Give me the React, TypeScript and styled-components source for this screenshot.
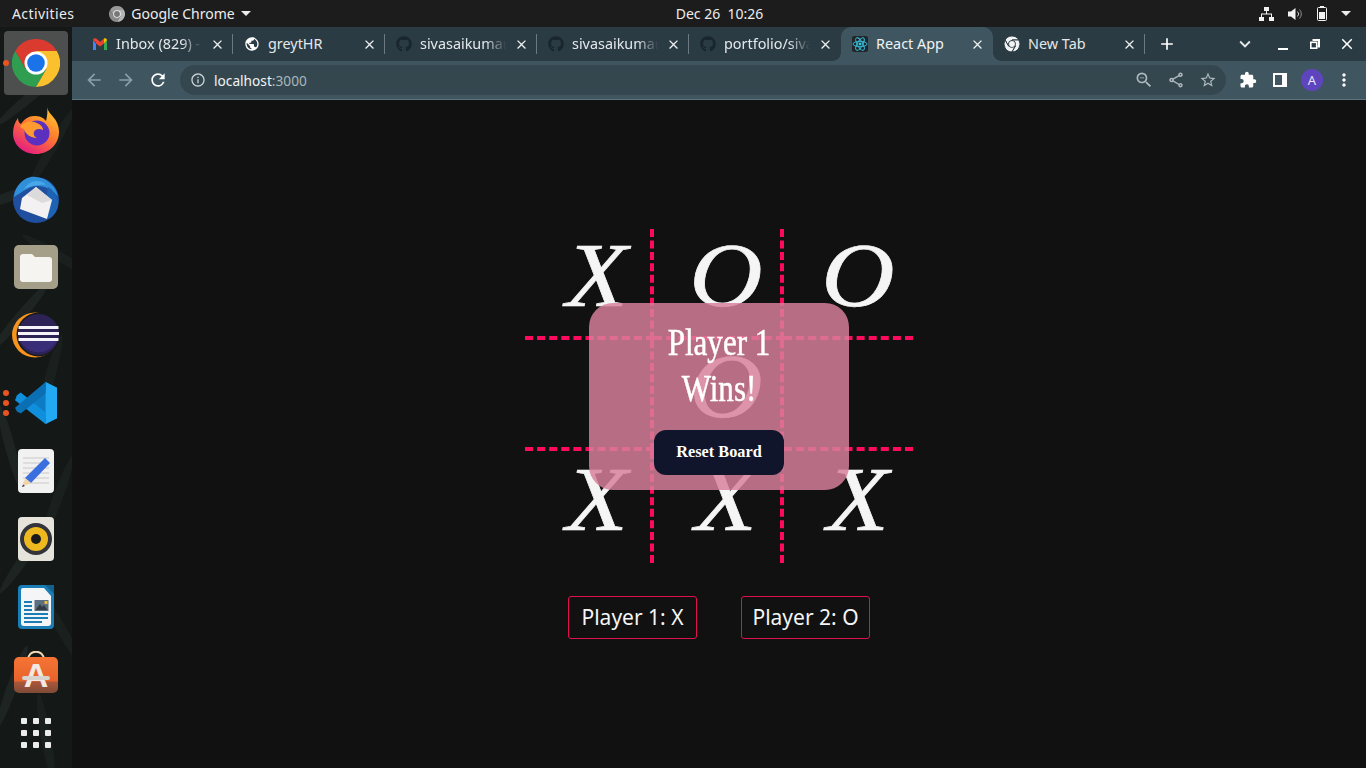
import React from "react";
import styled, { createGlobalStyle } from "styled-components";
import {
  MdAdd,
  MdArrowBack,
  MdArrowForward,
  MdClose,
  MdExpandMore,
  MdExtension,
  MdInfoOutline,
  MdMoreVert,
  MdOutlineShare,
  MdPublic,
  MdRefresh,
  MdStarBorder,
  MdZoomOut
} from "react-icons/md";
import { FaGithub } from "react-icons/fa";

const GlobalStyle = createGlobalStyle`
  html, body {
    margin: 0;
    width: 1366px;
    height: 768px;
    overflow: hidden;
    background: #111111;
    font-family: "Noto Sans", "Open Sans", sans-serif;
  }
`;

const Screen = styled.div`
  width: 1366px;
  height: 768px;
  display: grid;
  grid-template-rows: 27px 1fr;
  grid-template-columns: 72px 1fr;
`;

/* ---- gnome top bar ---- */

const TopBar = styled.header`
  grid-column: 1 / 3;
  display: grid;
  grid-template-columns: 1fr auto 1fr;
  align-items: center;
  background: #1c1c1c;
  color: #ececec;
  font-size: 14px;
  padding: 0 15px 0 12px;
`;

const TopLeft = styled.div`
  display: flex;
  align-items: center;
`;

const Activities = styled.span`
  letter-spacing: 0.4px;
`;

const AppMenu = styled.div`
  display: flex;
  align-items: center;
  gap: 6px;
  margin-left: 35px;
`;

const Caret = styled.span`
  width: 0;
  height: 0;
  border-left: 5px solid transparent;
  border-right: 5px solid transparent;
  border-top: 5px solid #ececec;
`;

const Clock = styled.div`
  white-space: pre;
  margin-left: 76px;
`;

const TopRight = styled.div`
  display: flex;
  align-items: center;
  justify-content: flex-end;
  gap: 14px;
`;

/* ---- dock ---- */

const Dock = styled.nav`
  position: relative;
  overflow: hidden;
  display: flex;
  flex-direction: column;
  align-items: center;
  gap: 4px;
  padding-top: 4px;
  background: #141816;
`;

const Leaves = styled.svg`
  position: absolute;
  inset: 0;
`;

const DockItem = styled.div<{ $active?: boolean; $short?: boolean }>`
  position: relative;
  flex: none;
  width: 64px;
  height: ${(p) => (p.$short ? "44px" : "64px")};
  display: flex;
  align-items: center;
  justify-content: center;
  border-radius: 4px;
  background: ${(p) => (p.$active ? "#4d4f4f" : "transparent")};
`;

const RunDots = styled.div`
  position: absolute;
  left: -1px;
  top: 50%;
  transform: translateY(-50%);
  display: flex;
  flex-direction: column;
  gap: 4px;
`;

const RunDot = styled.span`
  width: 6px;
  height: 6px;
  border-radius: 50%;
  background: #e95420;
`;

const AppGrid = styled.div`
  display: grid;
  grid-template-columns: repeat(3, 6px);
  gap: 6px;
`;

const AppGridDot = styled.span`
  width: 6px;
  height: 6px;
  border-radius: 1px;
  background: #ececec;
`;

/* ---- browser ---- */

const Browser = styled.div`
  display: flex;
  flex-direction: column;
  min-width: 0;
`;

const TabStrip = styled.div`
  height: 34px;
  display: flex;
  align-items: stretch;
  padding-left: 9px;
  background: #2b3b43;
`;

const Tab = styled.div<{ $active?: boolean }>`
  position: relative;
  width: 152px;
  box-sizing: border-box;
  display: flex;
  align-items: center;
  padding: 0 8px 0 11px;
  color: ${(p) => (p.$active ? "#f0f3f4" : "#e4e8ea")};
  background: ${(p) => (p.$active ? "#3f5660" : "transparent")};
  border-radius: ${(p) => (p.$active ? "10px 10px 0 0" : "0")};
  font-size: 14.4px;
  /* the active tab flares into the toolbar at its two bottom corners */
  &::before,
  &::after {
    content: "";
    display: ${(p) => (p.$active ? "block" : "none")};
    position: absolute;
    bottom: 0;
    width: 8px;
    height: 8px;
  }
  &::before {
    left: -8px;
    background: radial-gradient(circle at 0 0, transparent 7.5px, #3f5660 8px);
  }
  &::after {
    right: -8px;
    background: radial-gradient(circle at 100% 0, transparent 7.5px, #3f5660 8px);
  }
`;

const TabSeparator = styled.span`
  position: absolute;
  right: 0;
  top: 7px;
  bottom: 7px;
  width: 1px;
  background: #6b7a81;
`;

const TabIcon = styled.span`
  width: 16px;
  height: 16px;
  flex: none;
  display: flex;
  align-items: center;
  justify-content: center;
`;

const TabTitle = styled.span<{ $fade?: boolean }>`
  flex: 1;
  min-width: 0;
  margin: -2px 8px 0 8px;
  overflow: hidden;
  white-space: nowrap;
  ${(p) =>
    p.$fade
      ? "mask-image: linear-gradient(to right, #000 76%, transparent 100%);"
      : ""}
`;

const TabClose = styled(MdClose)`
  flex: none;
  width: 15px;
  height: 15px;
  color: #eef1f2;
`;

const NewTabButton = styled(MdAdd)`
  align-self: center;
  width: 20px;
  height: 20px;
  margin-left: 12px;
  color: #ffffff;
`;

const WindowControls = styled.div`
  margin-left: auto;
  display: flex;
  align-items: center;
  padding-right: 3px;
  color: #ffffff;
`;

const WindowButton = styled.span<{ $gapRight?: boolean }>`
  width: 32px;
  display: flex;
  align-items: center;
  justify-content: center;
  margin-right: ${(p) => (p.$gapRight ? "6px" : "0")};
`;

const Toolbar = styled.div`
  height: 39px;
  box-sizing: border-box;
  display: flex;
  align-items: center;
  padding-left: 6px;
  background: #3f5660;
  border-bottom: 1px solid #5b7480;
`;

const NavButton = styled.span<{ $dim?: boolean }>`
  width: 32px;
  display: flex;
  justify-content: center;
  font-size: 20px;
  color: ${(p) => (p.$dim ? "#8d9ea6" : "#ffffff")};
`;

const Omnibox = styled.div`
  width: 1046px;
  height: 30px;
  margin-left: 6px;
  display: flex;
  align-items: center;
  padding: 0 2px 0 10px;
  box-sizing: border-box;
  border-radius: 15px;
  background: #34474f;
  font-size: 13.7px;
  color: #f1f3f4;
`;

const Url = styled.span`
  margin-left: 8px;
  flex: 1;
`;

const UrlPort = styled.span`
  color: #aab6bb;
`;

const OmniAction = styled.span`
  width: 32px;
  display: flex;
  justify-content: center;
  color: #aeb8bd;
`;

const ToolActions = styled.div`
  display: flex;
  align-items: center;
  margin-left: 6px;
`;

const ToolAction = styled.span`
  width: 32px;
  display: flex;
  justify-content: center;
  color: #ffffff;
`;

const Avatar = styled.span`
  width: 22px;
  height: 22px;
  border-radius: 50%;
  background: #5e45bd;
  color: #e9e4fa;
  font-size: 13px;
  display: flex;
  align-items: center;
  justify-content: center;
`;

/* ---- the game ---- */

const Page = styled.main`
  flex: 1;
  display: flex;
  flex-direction: column;
  align-items: center;
  padding-top: 129px;
  background: #111111;
`;

const Board = styled.div`
  position: relative;
  display: grid;
  grid-template-columns: 129px 130px 129px;
  grid-template-rows: 111px 111px 112px;
`;

const Cell = styled.div<{ $right?: boolean; $bottom?: boolean }>`
  box-sizing: border-box;
  border-right: ${(p) => (p.$right ? "4px dashed #ff0a5e" : "0")};
  border-bottom: ${(p) => (p.$bottom ? "4px dashed #ff0a5e" : "0")};
  display: flex;
  justify-content: center;
  align-items: center;
  padding-left: 18px;
`;

const Mark = styled.span`
  display: inline-block;
  color: #f5f5f5;
  font-family: "Liberation Serif", serif;
  font-style: italic;
  font-size: 91px;
  line-height: 92px;
  transform: translateY(-7px) scaleX(1.11);
  -webkit-text-stroke: 0.7px #f5f5f5;
`;

const WinModal = styled.div`
  position: absolute;
  left: 64px;
  top: 74px;
  width: 260px;
  height: 187px;
  box-sizing: border-box;
  padding-top: 17px;
  display: flex;
  flex-direction: column;
  align-items: center;
  border-radius: 24px;
  background: rgba(216, 129, 155, 0.84);
`;

const WinText = styled.div`
  color: #ffffff;
  font-family: "Liberation Serif", serif;
  font-size: 37px;
  line-height: 46px;
  text-align: center;
  width: 130px;
  transform: scaleX(0.84);
  -webkit-text-stroke: 0.5px #ffffff;
`;

const ResetButton = styled.button`
  width: 130px;
  height: 45px;
  margin-top: 18px;
  padding: 0 0 2px;
  border: 0;
  border-radius: 12px;
  background: #11152b;
  color: #ffffff;
  font-family: "Liberation Serif", serif;
  font-weight: 700;
  font-size: 16.3px;
`;

const Players = styled.div`
  display: flex;
  gap: 44px;
  margin-top: 33px;
`;

const PlayerBox = styled.div`
  width: 129px;
  height: 43px;
  box-sizing: border-box;
  border: 1px solid #e0104f;
  border-radius: 3px;
  padding-bottom: 1px;
  display: flex;
  align-items: center;
  justify-content: center;
  color: #f5f5f5;
  font-size: 21px;
`;

/* ---- drawings ---- */

const ChromeLogo = ({
  size = 48,
  red = "#db3b2f",
  green = "#2f9e50",
  yellow = "#fbc02d",
  ring = "#ffffff",
  core = "#1a73e8",
  seam = 0
}: {
  size?: number;
  red?: string;
  green?: string;
  yellow?: string;
  ring?: string;
  core?: string;
  seam?: number;
}) => (
  <svg width={size} height={size} viewBox="0 0 48 48">
    <g stroke={ring} strokeWidth={seam}>
      <path d="M24 24 13.6 30 3.2 12A24 24 0 0 1 44.8 12H24Z" fill={red} />
      <path d="M24 24 34.4 30 24 48A24 24 0 0 1 3.2 12L13.6 30Z" fill={green} />
      <path d="M24 24V12H44.8A24 24 0 0 1 24 48L34.4 30Z" fill={yellow} />
    </g>
    <circle cx="24" cy="24" r="11.5" fill={ring} />
    <circle cx="24" cy="24" r="8.8" fill={core} />
  </svg>
);

const GmailIcon = () => (
  <svg width="14" height="12" viewBox="0 0 14 12">
    <path d="M0 2.2V12H3V5.5Z" fill="#4285f4" />
    <path d="M14 2.2V12H11V5.5Z" fill="#34a853" />
    <path d="M0 2.2C0 .4 1.8-.4 3 .6L7 4 7 7.2 0 2.2Z" fill="#ea4335" />
    <path d="M3 .6 7 4 11 .6 11 5.5 7 8.4 3 5.5Z" fill="#ea4335" />
    <path d="M14 2.2C14 .4 12.2-.4 11 .6V5.5Z" fill="#fbbc04" />
  </svg>
);

const ReactIcon = () => (
  <svg width="16" height="16" viewBox="0 0 16 16">
    <rect width="16" height="16" rx="2" fill="#20262c" />
    <g fill="none" stroke="#36c5e0" strokeWidth="0.9">
      <ellipse cx="8" cy="8" rx="7" ry="2.7" />
      <ellipse cx="8" cy="8" rx="7" ry="2.7" transform="rotate(60 8 8)" />
      <ellipse cx="8" cy="8" rx="7" ry="2.7" transform="rotate(120 8 8)" />
    </g>
    <circle cx="8" cy="8" r="1.4" fill="#36c5e0" />
  </svg>
);

const NetworkIcon = () => (
  <svg width="15" height="14" viewBox="0 0 15 14" fill="#f2f2f2">
    <rect x="5" y="0" width="5" height="4" />
    <rect x="0" y="10" width="5" height="4" />
    <rect x="10" y="10" width="5" height="4" />
    <path d="M7 4h1v2.500h5V10h-1V7.500H3V10H2V6.500h5Z" />
  </svg>
);

const VolumeIcon = () => (
  <svg width="15" height="14" viewBox="0 0 15 14">
    <path d="M0 4.500h3L7.500 1v12L3 9.500H0Z" fill="#f2f2f2" />
    <path d="M9.500 4.500a3.500 3.500 0 0 1 0 5" fill="none" stroke="#cfcfcf" />
    <path d="M11.500 2.500a6.500 6.500 0 0 1 0 9" fill="none" stroke="#8f8f8f" />
  </svg>
);

const BatteryIcon = () => (
  <svg width="10" height="15" viewBox="0 0 10 15">
    <rect x="3" y="0" width="4" height="2" fill="#f2f2f2" />
    <rect x=".5" y="1.500" width="9" height="13" rx="1" fill="none" stroke="#f2f2f2" />
    <rect x="2" y="6" width="6" height="7" fill="#f2f2f2" />
  </svg>
);

const MaximizeIcon = () => (
  <svg width="10" height="10" viewBox="0 0 10 10" fill="none" stroke="#fff">
    <path d="M2.500 1H9V7.500H7.500" strokeWidth="2" />
    <rect x=".8" y="3.300" width="5.900" height="5.900" strokeWidth="1.600" />
  </svg>
);

const MinimizeIcon = () => (
  <svg width="10" height="14" viewBox="0 0 10 14">
    <rect x="0" y="11" width="10" height="2" fill="#fff" />
  </svg>
);

const SidePanelIcon = () => (
  <svg width="14" height="14" viewBox="0 0 14 14">
    <rect width="14" height="14" fill="#fff" />
    <rect x="2" y="2" width="7" height="10" fill="#3f5660" />
  </svg>
);

const FirefoxIcon = () => (
  <svg width="46" height="48" viewBox="0 0 46 48">
    <defs>
      <linearGradient id="ffBody" x1="0.8" y1="0" x2="0.2" y2="1">
        <stop offset="0" stopColor="#ffcb2e" />
        <stop offset="0.45" stopColor="#ff7a2f" />
        <stop offset="1" stopColor="#e31587" />
      </linearGradient>
    </defs>
    <path
      d="M34 0c1 5 4 7 7 11 4 5 5 10 5 14 0 12-10 22-23 22S0 38 0 26c0-6 2-11 5-15 0 3 1 5 3 6 3-5 8-8 13-8 5 0 9 1 12 5 1-5 2-9 1-14Z"
      fill="url(#ffBody)"
    />
    <circle cx="24" cy="26" r="12.500" fill="#5b2fbf" />
    <path d="M7 19c5-5 12-6 19-2 3 2 4 4 4 6-4-2-8-1-9 2-1 3 1 5 3 6-6 0-12-4-13-9-1 0-3-1-4-3Z" fill="#ff9a2e" />
  </svg>
);

const ThunderbirdIcon = () => (
  <svg width="48" height="48" viewBox="0 0 48 48">
    <circle cx="24" cy="25" r="23" fill="#1f4f9e" />
    <path d="M2 22C3 10 14 0 24 2c10 1 20 8 22 20-5-7-12-11-20-11-10 0-15 6-24 11Z" fill="#2f8fd8" />
    <path d="M36 12c5 3 9 8 10 14 1 8-3 14-9 18l-5-8Z" fill="#1e62b4" />
    <path d="M10 23 24 12 40 25 35 44 8 34Z" fill="#f3f1f1" />
    <path d="M15 20 30 28 40 25 24 12Z" fill="#dcdada" />
    <path d="M12 14c3-5 8-8 12-8 4 0 8 1 10 4-6-1-14 0-22 4Z" fill="#4aa8e8" />
  </svg>
);

const FilesIcon = () => (
  <svg width="44" height="44" viewBox="0 0 44 44">
    <rect width="44" height="44" rx="5" fill="#a59e89" />
    <path d="M6 12a3 3 0 0 1 3-3h9l3 3h14a3 3 0 0 1 3 3v19a3 3 0 0 1-3 3H9a3 3 0 0 1-3-3Z" fill="#f6f4f1" />
  </svg>
);

const EclipseIcon = () => (
  <svg width="48" height="46" viewBox="0 0 48 46">
    <ellipse cx="23" cy="23" rx="23" ry="22.500" fill="#f7941e" />
    <circle cx="26.500" cy="22.500" r="22" fill="#161a19" />
    <circle cx="26.500" cy="22.500" r="20.500" fill="#2c2255" />
    <path d="M7 26h39a20.500 20.500 0 0 1-39 0Z" fill="#3a2d78" />
    <rect x="6.500" y="14" width="40" height="3" fill="#f5f3fa" />
    <rect x="6" y="20" width="41" height="3" fill="#f5f3fa" />
    <rect x="6.500" y="26" width="40" height="3" fill="#f5f3fa" />
  </svg>
);

const VsCodeIcon = () => (
  <svg width="42" height="42" viewBox="0 0 44 44">
    <path d="M32 0 44 6V38L32 44 10 24 32 8Z" fill="#0e7cc4" />
    <path d="M32 0 44 6V38L32 44Z" fill="#23a9f1" />
    <path d="M2 14 6 11 32 32V44L0 19Z" fill="#0f8fdc" />
    <path d="M0 27 32 0V12L6 33 2 31Z" fill="#0b6fb3" />
  </svg>
);

const GeditIcon = () => (
  <svg width="36" height="44" viewBox="0 0 36 44">
    <rect width="36" height="44" rx="4" fill="#f1f1f1" />
    <g stroke="#c9c9c9">
      <path d="M5 9H31M5 14H31M5 19H31M5 24H31M5 29H31M5 34H31" />
    </g>
    <path d="M27 9 32 14 13 34 7 29Z" fill="#3a6fe0" />
    <path d="M7 29 13 34 5 37Z" fill="#f3d3a4" />
    <path d="M5 35.500 7 37 4 38Z" fill="#333" />
  </svg>
);

const RhythmboxIcon = () => (
  <svg width="36" height="44" viewBox="0 0 36 44">
    <rect width="36" height="44" rx="4" fill="#e6e3da" />
    <circle cx="18" cy="22" r="16" fill="#33333a" />
    <circle cx="18" cy="22" r="12" fill="#eeb91f" />
    <circle cx="18" cy="22" r="5" fill="#1b1b1b" />
  </svg>
);

const WriterIcon = () => (
  <svg width="36" height="44" viewBox="0 0 36 44">
    <path d="M4 0H36V40a4 4 0 0 1-4 4H4a4 4 0 0 1-4-4V4a4 4 0 0 1 4-4Z" fill="#1b7db5" />
    <path d="M5 3H26L33 11V38a3 3 0 0 1-3 3H6a3 3 0 0 1-3-3V5a2 2 0 0 1 2-2Z" fill="#f3f5f7" />
    <path d="M27 0H36V9Z" fill="#12618f" />
    <g fill="#1b7db5">
      <rect x="6" y="16" width="8" height="2" />
      <rect x="6" y="20" width="8" height="2" />
      <rect x="6" y="24" width="8" height="2" />
      <rect x="6" y="28" width="24" height="2" />
      <rect x="6" y="32" width="24" height="2" />
      <rect x="6" y="36" width="18" height="2" />
    </g>
    <rect x="16.500" y="15" width="14" height="11" fill="#5a6f7f" />
    <path d="M17.500 25 22 19 24 22 26 20 29.500 25Z" fill="#333c44" />
    <rect x="26.500" y="16" width="3" height="3" fill="#f0c040" />
  </svg>
);

const SoftwareIcon = () => (
  <svg width="46" height="48" viewBox="0 0 46 48">
    <defs>
      <linearGradient id="bagFill" x1="0" y1="0" x2="0" y2="1">
        <stop offset="0" stopColor="#f47435" />
        <stop offset="0.66" stopColor="#e8632b" />
        <stop offset="0.7" stopColor="#a9573a" />
        <stop offset="1" stopColor="#7d4a36" />
      </linearGradient>
    </defs>
    <path d="M15 9C15-2 31-2 31 9" fill="none" stroke="#f0d9b5" strokeWidth="2" />
    <rect x="1" y="6" width="44" height="36" rx="5" fill="url(#bagFill)" />
    <text
      x="23"
      y="36"
      textAnchor="middle"
      fontFamily="Liberation Sans, sans-serif"
      fontWeight="700"
      fontSize="34"
      fill="#f3e9e2"
    >
      A
    </text>
    <rect x="9" y="25" width="28" height="4" rx="2" fill="#d9d3cd" />
  </svg>
);

// thin palm fronds of the wallpaper showing through the dock
const fronds = [
  { x: 30, y: 70, r: 50 },
  { x: 52, y: 120, r: 30 },
  { x: 8, y: 170, r: 70 },
  { x: 60, y: 230, r: 120 },
  { x: 20, y: 290, r: 40 },
  { x: 50, y: 350, r: 15 },
  { x: 10, y: 420, r: 165 },
  { x: 58, y: 470, r: 20 },
  { x: 25, y: 530, r: 35 },
  { x: 60, y: 600, r: 150 },
  { x: 12, y: 660, r: 20 },
  { x: 46, y: 710, r: 170 }
];

const LeafPattern = () => (
  <Leaves width="72" height="741" viewBox="0 0 72 741" aria-hidden="true">
    {fronds.map((f, i) => (
      <ellipse
        key={i}
        cx={f.x}
        cy={f.y}
        rx="5"
        ry="44"
        fill={i % 2 ? "#1a201e" : "#1d2421"}
        transform={`rotate(${f.r} ${f.x} ${f.y})`}
      />
    ))}
  </Leaves>
);

const CHROME_GREY = {
  red: "#9a9a9a",
  green: "#8a8a8a",
  yellow: "#b5b5b5",
  ring: "#f0f0f0",
  core: "#777777"
};

const CHROME_MONO = {
  red: "#f1f3f4",
  green: "#f1f3f4",
  yellow: "#f1f3f4",
  ring: "#2b3b43",
  core: "#f1f3f4",
  seam: 3
};

const githubIcon = <FaGithub size={16} color="#1a262d" />;

const tabs = [
  { title: "Inbox (829) - a", icon: <GmailIcon />, fade: true, sep: true },
  { title: "greytHR", icon: <MdPublic size={18} color="#fff" />, sep: true },
  { title: "sivasaikumar", icon: githubIcon, fade: true, sep: true },
  { title: "sivasaikumar", icon: githubIcon, fade: true, sep: true },
  { title: "portfolio/sivasai", icon: githubIcon, fade: true },
  { title: "React App", icon: <ReactIcon />, active: true },
  { title: "New Tab", icon: <ChromeLogo size={16} {...CHROME_MONO} />, sep: true }
];

const cells = ["X", "O", "O", "", "O", "", "X", "X", "X"];

const dockApps = [
  { icon: <ChromeLogo />, active: true, dots: 1 },
  { icon: <FirefoxIcon /> },
  { icon: <ThunderbirdIcon /> },
  { icon: <FilesIcon /> },
  { icon: <EclipseIcon /> },
  { icon: <VsCodeIcon />, dots: 3 },
  { icon: <GeditIcon /> },
  { icon: <RhythmboxIcon /> },
  { icon: <WriterIcon /> },
  { icon: <SoftwareIcon /> }
];

const App = () => {
  return (
    <Screen>
      <GlobalStyle />
      <TopBar>
        <TopLeft>
          <Activities>Activities</Activities>
          <AppMenu>
            <ChromeLogo size={16} {...CHROME_GREY} />
            Google Chrome
            <Caret />
          </AppMenu>
        </TopLeft>
        <Clock>Dec 26  10:26</Clock>
        <TopRight>
          <NetworkIcon />
          <VolumeIcon />
          <BatteryIcon />
          <Caret />
        </TopRight>
      </TopBar>

      <Dock>
        <LeafPattern />
        {dockApps.map((app, i) => (
          <DockItem key={i} $active={app.active}>
            {app.dots ? (
              <RunDots>
                {Array.from({ length: app.dots }).map((_, d) => (
                  <RunDot key={d} />
                ))}
              </RunDots>
            ) : null}
            {app.icon}
          </DockItem>
        ))}
        <DockItem $short>
          <AppGrid>
            {Array.from({ length: 9 }).map((_, d) => (
              <AppGridDot key={d} />
            ))}
          </AppGrid>
        </DockItem>
      </Dock>

      <Browser>
        <TabStrip>
          {tabs.map((tab, i) => (
            <Tab key={i} $active={tab.active}>
              <TabIcon>{tab.icon}</TabIcon>
              <TabTitle $fade={tab.fade}>{tab.title}</TabTitle>
              <TabClose />
              {tab.sep ? <TabSeparator /> : null}
            </Tab>
          ))}
          <NewTabButton />
          <WindowControls>
            <WindowButton $gapRight>
              <MdExpandMore size={22} color="#e3e7e9" />
            </WindowButton>
            <WindowButton>
              <MinimizeIcon />
            </WindowButton>
            <WindowButton>
              <MaximizeIcon />
            </WindowButton>
            <WindowButton>
              <MdClose size={18} />
            </WindowButton>
          </WindowControls>
        </TabStrip>

        <Toolbar>
          <NavButton $dim>
            <MdArrowBack />
          </NavButton>
          <NavButton $dim>
            <MdArrowForward />
          </NavButton>
          <NavButton>
            <MdRefresh />
          </NavButton>
          <Omnibox>
            <MdInfoOutline size={16} color="#c9d1d5" />
            <Url>
              localhost<UrlPort>:3000</UrlPort>
            </Url>
            <OmniAction>
              <MdZoomOut size={20} />
            </OmniAction>
            <OmniAction>
              <MdOutlineShare size={18} />
            </OmniAction>
            <OmniAction>
              <MdStarBorder size={18} />
            </OmniAction>
          </Omnibox>
          <ToolActions>
            <ToolAction>
              <MdExtension size={18} />
            </ToolAction>
            <ToolAction>
              <SidePanelIcon />
            </ToolAction>
            <ToolAction>
              <Avatar>A</Avatar>
            </ToolAction>
            <ToolAction>
              <MdMoreVert size={20} />
            </ToolAction>
          </ToolActions>
        </Toolbar>

        <Page>
          <Board>
            {cells.map((mark, i) => (
              <Cell key={i} $right={i % 3 < 2} $bottom={i < 6}>
                {mark ? <Mark>{mark}</Mark> : null}
              </Cell>
            ))}
            <WinModal>
              <WinText>Player 1 Wins!</WinText>
              <ResetButton>Reset Board</ResetButton>
            </WinModal>
          </Board>
          <Players>
            <PlayerBox>Player 1: X</PlayerBox>
            <PlayerBox>Player 2: O</PlayerBox>
          </Players>
        </Page>
      </Browser>
    </Screen>
  );
};

export default App;
